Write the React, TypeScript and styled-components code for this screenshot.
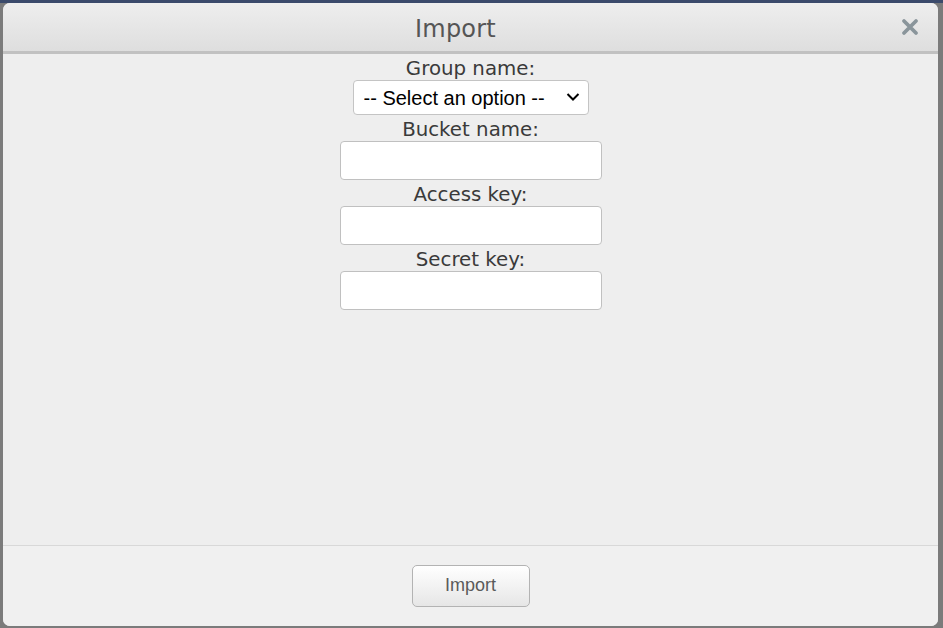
import React from "react";
import styled, { createGlobalStyle } from "styled-components";

const Global = createGlobalStyle`
  html, body { margin: 0; padding: 0; }
  body { font-family: "DejaVu Sans", Verdana, sans-serif; }
  * { box-sizing: border-box; }
`;

const Backdrop = styled.div`
  width: 943px;
  height: 628px;
  padding: 3px 5px 2px 3px;
  display: flex;
  background: linear-gradient(#3b4a6b 0, #3b4a6b 3px, #7b7b7b 3px);
  overflow: hidden;
`;

const Modal = styled.div`
  flex: 1;
  display: flex;
  flex-direction: column;
  border-radius: 7px;
  overflow: hidden;
  background: #eeeeee;
`;

const Header = styled.div`
  position: relative;
  height: 51px;
  display: flex;
  align-items: center;
  justify-content: center;
  padding: 4px 30px 0 0;
  background: linear-gradient(#eeeeee, #dedede);
  border-bottom: 3px solid #c1c1c1;
`;

const Title = styled.h1`
  margin: 0;
  font-family: "DejaVu Sans", Verdana, sans-serif;
  font-weight: normal;
  font-size: 24px;
  color: #555555;
  letter-spacing: 0.2px;
`;

const Close = styled.button`
  position: absolute;
  right: 18px;
  top: 14px;
  width: 20px;
  height: 20px;
  padding: 0;
  border: none;
  background: none;
  display: flex;
  align-items: center;
  justify-content: center;
`;

const Body = styled.div`
  flex: 1;
  display: flex;
  flex-direction: column;
  align-items: center;
  background: #eeeeee;
`;

const Label = styled.label`
  display: block;
  height: 26px;
  padding-top: 2px;
  line-height: 26px;
  font-size: 19.8px;
  color: #3a3a3a;
  text-align: center;
  overflow: visible;
`;

const SelectWrap = styled.div`
  position: relative;
  width: 236px;
  height: 35px;
`;

const Select = styled.select`
  appearance: none;
  -webkit-appearance: none;
  width: 100%;
  height: 100%;
  font-family: "Liberation Sans", Arial, sans-serif;
  font-size: 20px;
  color: #000;
  background: #fff;
  border: 1px solid #c4c4c4;
  border-radius: 4px;
  padding: 0 30px 0 10px;
  outline: none;
`;

const Arrow = styled.svg`
  position: absolute;
  right: 9px;
  top: 12px;
  pointer-events: none;
`;

const Input = styled.input`
  width: 262px;
  height: 39px;
  background: #fff;
  border: 1px solid #c0c0c0;
  border-radius: 4px;
  font-size: 18px;
  padding: 0 8px;
  outline: none;
`;

const Footer = styled.div`
  height: 81px;
  display: flex;
  align-items: center;
  justify-content: center;
  border-top: 1px solid #d8d8d8;
  background: #f0f0f0;
`;

const Button = styled.button`
  width: 118px;
  height: 42px;
  font-family: "Liberation Sans", Arial, sans-serif;
  font-size: 18px;
  color: #5a5a5a;
  background: linear-gradient(#ffffff, #e6e6e6);
  border: 1px solid #b3b3b3;
  border-radius: 5px;
  margin-bottom: 1px;
`;

export default function App() {
  return (
    <>
      <Global />
      <Backdrop>
        <Modal>
          <Header>
            <Title>Import</Title>
            <Close aria-label="Close">
              <svg width="18" height="18" viewBox="0 0 18 18">
                <path d="M3 3 L15 15 M15 3 L3 15" stroke="#8a959b" strokeWidth="3.8" strokeLinecap="round" />
              </svg>
            </Close>
          </Header>
          <Body>
            <Label>Group name:</Label>
            <SelectWrap>
              <Select defaultValue="">
                <option value="">-- Select an option --</option>
              </Select>
              <Arrow width="14" height="10" viewBox="0 0 14 10">
                <path d="M1.5 2 L7 7.5 L12.5 2" fill="none" stroke="#000" strokeWidth="2" />
              </Arrow>
            </SelectWrap>
            <Label>Bucket name:</Label>
            <Input type="text" />
            <Label>Access key:</Label>
            <Input type="text" />
            <Label>Secret key:</Label>
            <Input type="text" />
          </Body>
          <Footer>
            <Button>Import</Button>
          </Footer>
        </Modal>
      </Backdrop>
    </>
  );
}
